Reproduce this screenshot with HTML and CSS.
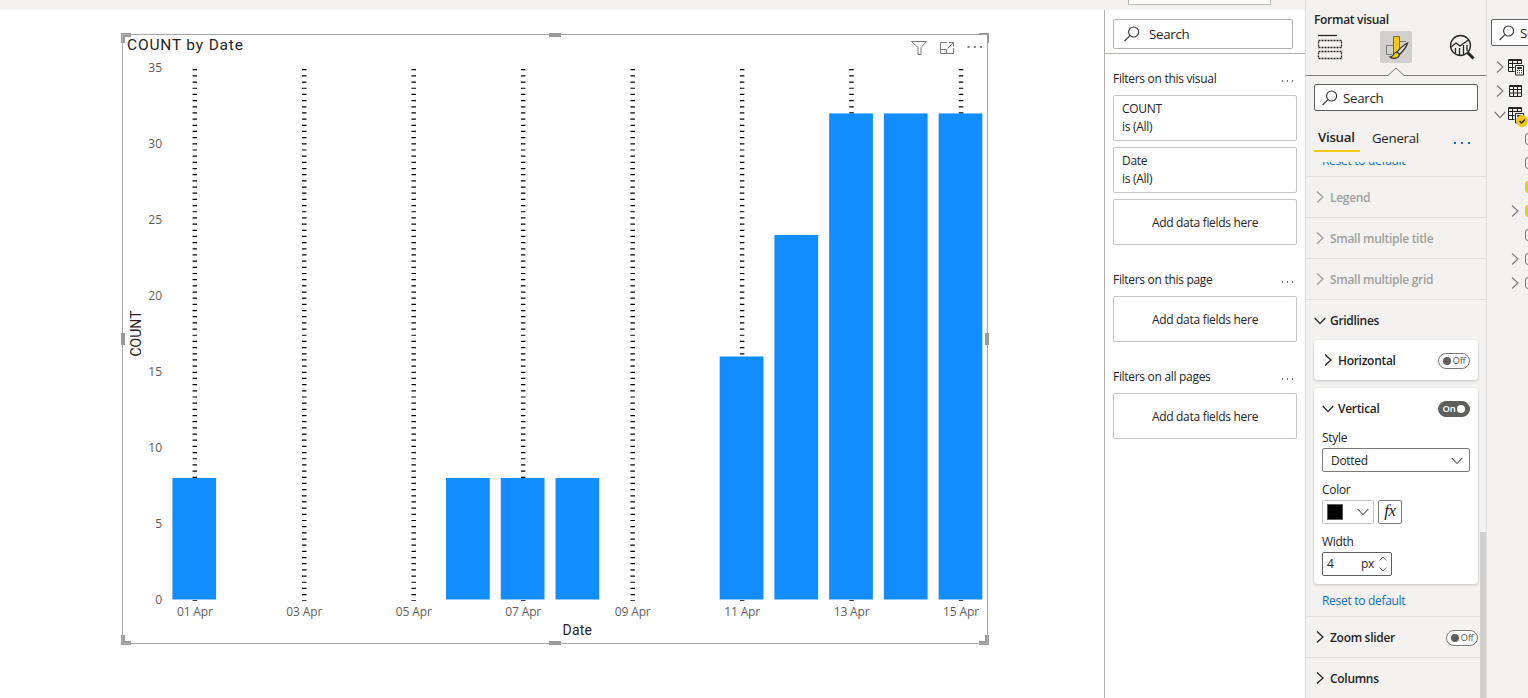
FILE: index.html
```html
<!DOCTYPE html>
<html lang="en">
<head>
<meta charset="utf-8">
<title>Report</title>
<link rel="stylesheet" href="styles.css">
</head>
<body>
<svg width="0" height="0" class="defs">
  <symbol id="search" viewBox="0 0 16 16"><circle cx="9.6" cy="6" r="5"/><path d="M6 9.6L.6 15"/></symbol>
  <symbol id="right" viewBox="0 0 8 12"><path d="M1 .5L7 6 1 11.500"/></symbol>
  <symbol id="down" viewBox="0 0 12 8"><path d="M.7 1L6 6.600 11.300 1"/></symbol>
  <symbol id="table" viewBox="0 0 14 14"><path d="M.5 1.500h12v11H.5zM.5 2.500h12M.5 5.500h12M.5 9h12M4.500 2v10.500M8.500 2v10.500"/></symbol>
  <symbol id="calc" viewBox="0 0 17 17"><path d="M13.500 5V.5H.5v12h6M.5 1.500h13M.5 4.500h13M.5 8.500h6M4.500 1v11.500M9.500 1v4"/><path d="M7.500 6.500h8v9.500h-8zM9.500 8.500h4v1h-4z"/><path d="M9 11.500h5M9 13.800h5" stroke-dasharray="1 1"/></symbol>
</svg>
<div class="app">
  <main class="canvas">
    <div class="strip"></div>
    <svg class="chart" id="chart" width="1104" height="688" viewBox="0 10 1104 688">
      <rect class="frame" x="122.500" y="34.500" width="865" height="609"/>
      <g class="handles">
        <path d="M121 33h10v4h-6v6h-4zM121 645h10v-4h-6v-6h-4zM979 33h10v10h-2v-8h-8zM989 645h-10v-4h6v-6h4z"/>
        <path d="M549 33h12v4h-12zM549 641h12v4h-12zM121 333h4v12h-4zM985 333h4v12h-4z"/>
      </g>
      <path class="handle-line" d="M122.500 43V34.500H131M122.500 635v8.500H131M987.500 635v8.500H979"/>
      <text class="title" x="127" y="50" textLength="116">COUNT by Date</text>
      <g class="tools">
        <path d="M911.500 41.500h15l-5.500 6v7h-3v-7z"/>
        <path d="M947 42.500h-6.500v11h13V48M940.500 49.500h6v4M947.500 48.500l6-6M949 42.500h4.500V46.500"/>
      </g>
      <path class="dots" d="M967.500 46h2v2h-2zM973.800 46h2v2h-2zM980 46h2v2h-2z"/>
      <g id="grid"></g>
      <g id="bars"></g>
      <g id="ticks"></g>
      <text class="axis" x="562.500" y="635" textLength="29.500">Date</text>
      <text class="axis" transform="translate(141 356.500) rotate(-90)" textLength="46">COUNT</text>
    </svg>
  </main>

  <aside class="filters">
    <div class="strip"><div class="popup"></div></div>
    <div class="filters-body">
      <div class="filter-search"><div class="search"><svg><use href="#search"/></svg><span>Search</span></div></div>
      <section>
        <header><span>Filters on this visual</span><i class="more"></i></header>
        <div class="card"><span>COUNT</span><span>is (All)</span></div>
        <div class="card"><span>Date</span><span>is (All)</span></div>
        <div class="card add"><span>Add data fields here</span></div>
      </section>
      <section>
        <header><span>Filters on this page</span><i class="more"></i></header>
        <div class="card add"><span>Add data fields here</span></div>
      </section>
      <section>
        <header><span>Filters on all pages</span><i class="more"></i></header>
        <div class="card add"><span>Add data fields here</span></div>
      </section>
    </div>
  </aside>

  <aside class="format">
    <h2>Format visual</h2>
    <svg class="modes" width="180" height="46" viewBox="1306 30 180 46">
      <path class="ink" d="M1318 35.500h19"/>
      <path class="ink dash" d="M1318.500 40.500h23v7h-23zM1318.500 51.500h23v7h-23z"/>
      <rect x="1380" y="31" width="32" height="32" rx="2" fill="#d2d0ce"/>
      <path class="grey" d="M1392 54.500h-5.500V45.500h6.500M1400 41.500h6"/>
      <path d="M1393.500 36.500h6v14l-6 6z" fill="#f2c811" stroke="#7a6a20"/>
      <path d="M1407.500 43c-4 2-8 6-10.500 9l2.500 2.500c3-3 7-7 8-11.500z" fill="#e8e6e4" stroke="#333" stroke-width="1.300"/>
      <path d="M1397 52c-4 0-3 5-7 5 3 2.500 9 1.500 9.500-2.500z" fill="#f2c811" stroke="#333" stroke-width="1.200"/>
      <circle class="ink" cx="1460.500" cy="45.500" r="10"/>
      <path class="ink" d="M1451 47l5-4 4 3 8.500-6M1455.500 53v-5M1459.500 55v-7M1463.500 55V45M1467 51v-6"/>
      <path d="M1467.500 52.500l6 6" stroke="#252423" stroke-width="3"/>
      <path class="grey" d="M1306 75.500h82l8-7.500 8 7.500h82"/>
    </svg>
    <div class="search"><svg><use href="#search"/></svg><span>Search</span></div>
    <nav><b>Visual</b><span>General</span><i class="more"></i></nav>
    <div class="scroll">
      <div class="rows">
        <div class="clipped"><a>Reset to default</a></div>
        <div class="row off"><svg class="r"><use href="#right"/></svg><b>Legend</b></div>
        <div class="row off"><svg class="r"><use href="#right"/></svg><b>Small multiple title</b></div>
        <div class="row off"><svg class="r"><use href="#right"/></svg><b>Small multiple grid</b></div>
        <div class="group">
          <div class="row"><svg class="d"><use href="#down"/></svg><b>Gridlines</b></div>
          <div class="panel">
            <div class="phead"><svg class="r"><use href="#right"/></svg><b>Horizontal</b><div class="toggle"><i></i>Off</div></div>
          </div>
          <div class="panel tall">
            <div class="phead"><svg class="d"><use href="#down"/></svg><b>Vertical</b><div class="toggle on">On<i></i></div></div>
            <label>Style</label>
            <div class="select"><span>Dotted</span><svg class="d"><use href="#down"/></svg></div>
            <label>Color</label>
            <div class="color"><div class="pick"><i></i><svg class="d"><use href="#down"/></svg></div><div class="fx">fx</div></div>
            <label>Width</label>
            <div class="num"><span>4</span><span>px</span><svg viewBox="0 0 8 16"><path d="M.5 4.500L4 1l3.500 3.500M.5 11.500L4 15l3.500-3.500"/></svg></div>
          </div>
          <a class="reset">Reset to default</a>
        </div>
        <div class="row"><svg class="r"><use href="#right"/></svg><b>Zoom slider</b><div class="toggle"><i></i>Off</div></div>
        <div class="row"><svg class="r"><use href="#right"/></svg><b>Columns</b></div>
      </div>
      <div class="bar"></div>
    </div>
  </aside>

  <aside class="data">
    <div class="search"><svg><use href="#search"/></svg><span>Search</span></div>
    <div class="tree">
      <div class="node"><svg class="r"><use href="#right"/></svg><svg class="ic"><use href="#calc"/></svg></div>
      <div class="node"><svg class="r"><use href="#right"/></svg><svg class="tb"><use href="#table"/></svg></div>
      <div class="node open"><svg class="d"><use href="#down"/></svg><svg class="ic"><use href="#calc"/></svg><svg class="badge" viewBox="0 0 12 12"><circle cx="6" cy="6" r="6" fill="#f2c811"/><path d="M3.500 6l2 2 3.500-3.500" fill="none" stroke="#252423" stroke-width="1.500"/></svg></div>
      <div class="node leaf"><i></i></div>
      <div class="node leaf"><i></i></div>
      <div class="node leaf"><i class="sel"></i></div>
      <div class="node leaf"><svg class="r"><use href="#right"/></svg><i class="sel"></i></div>
      <div class="node leaf"><i></i></div>
      <div class="node leaf"><svg class="r"><use href="#right"/></svg><i></i></div>
      <div class="node leaf"><svg class="r"><use href="#right"/></svg><i></i></div>
    </div>
  </aside>
</div>
<script src="chart.js"></script>
</body>
</html>
```
FILE: styles.css
```css
* { box-sizing: border-box; }
body { margin: 0; font: 12px/18px "Open Sans", "Noto Sans", sans-serif; font-stretch: 90%; letter-spacing: -.3px; color: #252423; background: #fff; overflow: hidden; }
i { font-style: normal; }
b { font-weight: 600; }
svg { display: block; flex: none; fill: none; }
.defs { position: absolute; }
.app { display: grid; grid-template-columns: 1104px 201px 182px 41px; height: 698px; }
.strip { height: 10px; background: #f3f2f1; }

.frame { stroke: #a6a6a6; }
.handles { fill: #999; }
.handle-line { stroke: #b3b3b3; }
.title { font: 15.500px Roboto, sans-serif; fill: #252423; letter-spacing: 0; }
.axis { font: 14px Roboto, sans-serif; fill: #252423; letter-spacing: 0; }
.tools { stroke: #7d7977; }
.dots { fill: #7d7977; }
.gridline { stroke: #000; stroke-width: 4.500; stroke-dasharray: 1.235 4.940; }
.col { fill: #118dff; }
.tick { font: 12px "Open Sans", sans-serif; fill: #605e5c; letter-spacing: 0; }

.filters { display: flex; flex-direction: column; }
.filters > .strip { padding-left: 24px; }
.popup { width: 143px; height: 5px; background: #fff; border: 1px solid #bbb8b5; border-top: 0; }
.filters-body { flex: 1; border-left: 1px solid #b3b0ad; }
.filter-search { height: 44px; padding: 9px 12px 0 8px; border-bottom: 1px solid #b3b0ad; }
.search { display: flex; align-items: center; background: #fff; border: 1px solid #605e5c; border-radius: 2px; font-size: 13.300px; }
.search svg { width: 16px; height: 16px; stroke: #333; stroke-width: 1.100; }
.filter-search .search { height: 30px; padding: 0 0 1px 10px; gap: 9px; border-color: #b3b0ad; }
.filters section { padding: 16px 8px 0; margin-bottom: 15px; }
.filters section + section { padding-top: 11px; }
.filters header { display: flex; justify-content: space-between; align-items: center; height: 18px; margin-bottom: 7px; }
.filters header .more { margin: 4px 4px 0 0; }
.more { width: 11px; height: 2px; background: repeating-linear-gradient(90deg, #706d6b 0 1px, transparent 1px 5px); }
.card { display: flex; flex-direction: column; height: 46px; padding: 4px 8px; border: 1px solid #c8c6c4; border-radius: 2px; margin-bottom: 6px; }
.card.add { align-items: center; justify-content: center; padding-top: 6px; }

.format { display: flex; flex-direction: column; background: #f3f2f1; border-left: 1px solid #e1dfdd; border-right: 1px solid #e1dfdd; height: 698px; overflow: hidden; }
.format h2 { margin: 11px 0 1px 8px; font-size: 12px; font-weight: 600; }
.ink { stroke: #252423; stroke-width: 1.300; }
.dash { stroke-dasharray: 2 1; }
.grey { stroke: #7d7977; }
.format > .search { margin: 8px 8px 0; height: 27px; flex: none; padding-left: 7px; gap: 5px; }
.format nav { display: flex; height: 41px; flex: none; margin: 0 8px; font-size: 13.300px; line-height: 18px; padding-top: 17px; }
.format nav b { width: 46px; height: 24px; padding-left: 4px; border-bottom: 2px solid #f2c811; }
.format nav span { padding: 1px 0 0 12px; }
.format nav .more { margin: 14px 8px 0 auto; width: 16px; background: repeating-linear-gradient(90deg, #1f6fbf 0 2px, transparent 2px 7px); }
.scroll { display: flex; flex: 1; margin-top: 10px; overflow: hidden; }
.rows { width: 174px; flex: none; }
.bar { width: 6px; flex: none; margin-top: 370px; background: #d2d0ce; }
.clipped { height: 14px; overflow: hidden; padding-left: 16px; }
.clipped a { display: block; margin-top: -10px; }
a { color: #106ebe; }
.row { display: flex; align-items: center; height: 41px; width: 180px; padding: 2px 14px 0 10px; border-top: 1px solid #e1dfdd; }
.row .r { width: 8px; height: 12px; margin: -2px 6px 0 0; }
.row .d { width: 12px; height: 8px; margin: 0 4px 0 -2px; }
.r, .d { stroke: #252423; stroke-width: 1.300; }
.off { color: #a19f9d; }
.off .r { stroke: #a19f9d; }
.row .toggle { margin-right: -6px; }
.panel { width: 164px; height: 40px; margin: 0 0 8px 8px; padding: 0 8px; background: #fff; border-radius: 4px; box-shadow: 0 1px 3px rgba(0,0,0,.2); }
.panel.tall { height: 196px; }
.phead { display: flex; align-items: center; height: 40px; padding-top: 1px; }
.phead .r { width: 8px; height: 12px; margin: -2px 6px 0 2px; }
.phead .d { width: 12px; height: 8px; margin-right: 4px; }
.toggle { display: flex; align-items: center; justify-content: center; gap: 2px; width: 32px; height: 16px; margin-left: auto; border: 1px solid #7d7977; border-radius: 8px; background: #fff; font-size: 9.500px; line-height: 14px; color: #605e5c; }
.toggle i { width: 8px; height: 8px; border-radius: 50%; background: #605e5c; }
.toggle.on { background: #605e5c; border-color: #605e5c; color: #fff; font-weight: 600; }
.toggle.on i { background: #fff; }
label { display: block; height: 20px; padding-top: 1px; }
.select { display: flex; align-items: center; justify-content: space-between; height: 24px; margin-bottom: 8px; padding: 1px 6px 0 8px; border: 1px solid #7d7977; border-radius: 2px; }
.select .d, .pick .d { width: 12px; height: 8px; stroke-width: 1; }
.color { display: flex; gap: 4px; margin-bottom: 8px; }
.pick { display: flex; align-items: center; justify-content: space-between; width: 52px; height: 24px; padding: 0 4px; border: 1px solid #c8c6c4; border-radius: 2px; }
.pick i { width: 16px; height: 16px; background: #000; border: 1px solid #605e5c; }
.fx { width: 24px; height: 24px; border: 1px solid #7d7977; border-radius: 2px; font: italic 17px/19px "Liberation Serif", serif; text-align: center; }
.num { display: flex; align-items: center; width: 70px; height: 24px; padding: 0 4px; border: 1px solid #605e5c; border-radius: 2px; }
.num span:first-child { flex: 1; }
.num svg { width: 8px; height: 16px; margin-left: 5px; stroke: #7d7977; }
.reset { display: block; height: 24px; padding: 0 0 0 16px; }

.data { background: #f3f2f1; overflow: hidden; }
.data .search { width: 180px; height: 27px; margin: 19px 0 0 4px; padding-left: 7px; gap: 5px; }
.tree { margin-top: 9px; }
.node { display: flex; align-items: center; position: relative; width: 70px; height: 24px; padding-left: 9px; }
.node .r { width: 8px; height: 12px; stroke: #7d7977; stroke-width: 1.100; }
.node .d { width: 12px; height: 8px; margin-left: -2px; stroke: #7d7977; stroke-width: 1.100; }
.node .ic { width: 17px; height: 17px; margin-left: 4px; stroke: #252423; }
.node.open .ic { margin-left: 2px; }
.node .tb { width: 14px; height: 14px; margin-left: 5px; stroke: #252423; }
.badge { position: absolute; left: 29px; top: 12px; width: 12px; height: 12px; }
.leaf .r { position: absolute; left: 24px; }
.leaf i { margin-left: 29px; width: 12px; height: 12px; border: 1px solid #7d7977; border-radius: 3px; }
.leaf i.sel { background: #f2c811; border-color: #f2c811; }
```
FILE: chart.js
```js
const NS = 'http://www.w3.org/2000/svg';
const add = (parent, tag, attrs, text) => {
  const el = document.createElementNS(NS, tag);
  for (const k in attrs) el.setAttribute(k, attrs[k]);
  if (text !== undefined) el.textContent = text;
  document.getElementById(parent).appendChild(el);
};
const STEP = 54.730, X0 = 194.400, BASE = 599.500, UNIT = 15.190;
for (let day = 1; day <= 15; day += 2) {
  const x = X0 + (day - 1) * STEP;
  add('grid', 'line', { class: 'gridline', x1: x + 0.400, x2: x + 0.400, y1: 69.100, y2: 601 });
  add('ticks', 'text', { class: 'tick', x: x - 17.500, y: 616, textLength: 36 }, String(day).padStart(2, '0') + ' Apr');
}
const counts = { 1: 8, 6: 8, 7: 8, 8: 8, 11: 16, 12: 24, 13: 32, 14: 32, 15: 32 };
for (const day in counts) {
  const h = counts[day] * UNIT;
  add('bars', 'rect', { class: 'col', x: X0 + (day - 1) * STEP - 22, y: BASE - h, width: 43.700, height: h });
}
for (let v = 0; v <= 35; v += 5) {
  add('ticks', 'text', { class: 'tick', x: 162, y: 604 - v * 15.200, 'text-anchor': 'end' }, v);
}
```
